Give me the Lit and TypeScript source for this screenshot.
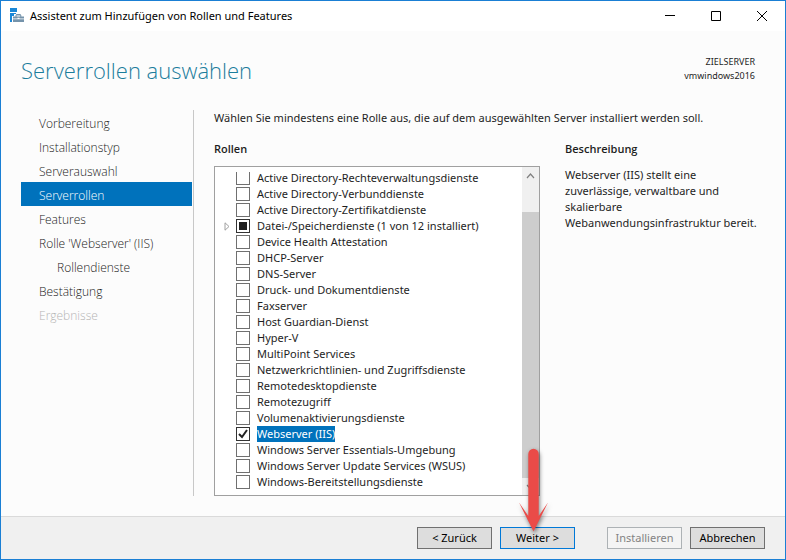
import { LitElement, html, css, svg } from "lit";
import { customElement, property } from "lit/decorators.js";
import { classMap } from "lit/directives/class-map.js";
import { live } from "lit/directives/live.js";

interface Step {
  label: string;
  state?: "current" | "disabled";
  sub?: boolean;
}

interface Role {
  label: string;
  checked?: boolean;
  partial?: boolean;
  selected?: boolean;
}

const STEPS: Step[] = [
  { label: "Vorbereitung" },
  { label: "Installationstyp" },
  { label: "Serverauswahl" },
  { label: "Serverrollen", state: "current" },
  { label: "Features" },
  { label: "Rolle 'Webserver' (IIS)" },
  { label: "Rollendienste", sub: true },
  { label: "Bestätigung" },
  { label: "Ergebnisse", state: "disabled" },
];

const ROLES: Role[] = [
  { label: "Active Directory-Rechteverwaltungsdienste" },
  { label: "Active Directory-Verbunddienste" },
  { label: "Active Directory-Zertifikatdienste" },
  { label: "Datei-/Speicherdienste (1 von 12 installiert)", partial: true },
  { label: "Device Health Attestation" },
  { label: "DHCP-Server" },
  { label: "DNS-Server" },
  { label: "Druck- und Dokumentdienste" },
  { label: "Faxserver" },
  { label: "Host Guardian-Dienst" },
  { label: "Hyper-V" },
  { label: "MultiPoint Services" },
  { label: "Netzwerkrichtlinien- und Zugriffsdienste" },
  { label: "Remotedesktopdienste" },
  { label: "Remotezugriff" },
  { label: "Volumenaktivierungsdienste" },
  { label: "Webserver (IIS)", checked: true, selected: true },
  { label: "Windows Server Essentials-Umgebung" },
  { label: "Windows Server Update Services (WSUS)" },
  { label: "Windows-Bereitstellungsdienste" },
];

@customElement("wizard-titlebar")
export class WizardTitlebar extends LitElement {
  static styles = css`
    :host {
      display: flex;
      align-items: center;
      height: 30px;
      padding-left: 8px;
      background: #fff;
      color: #000;
    }
    .logo {
      display: block;
      flex: none;
      margin-right: 5px;
    }
    .caption {
      flex: 1;
      font-size: 11px;
      line-height: 16px;
      white-space: nowrap;
    }
    .control {
      display: flex;
      align-items: center;
      justify-content: center;
      width: 46px;
      height: 30px;
      padding: 0;
      border: 0;
      background: none;
    }
  `;

  render() {
    return html`
      <svg class="logo" width="16" height="16" viewBox="0 0 16 16" aria-hidden="true">
        <path d="M1 0h7v4H1zM1 5h6v1H5v2H3v6H1z" fill="#1b87d6" />
        <path d="M4 8.500h2.500V7.300L7.500 6h3.800l1 1.300v1.200H15V14H4z" fill="#7593ab" />
        <path d="M7.500 8.500V7.500h3.800v1zM4 10.500h4.500v-.8h2v.8H15v.8H4z" fill="#fff" />
      </svg>
      <span class="caption">Assistent zum Hinzufügen von Rollen und Features</span>
      <button class="control" aria-label="Minimieren">
        <svg width="10" height="10"><path d="M0 4.500h10" stroke="#000" /></svg>
      </button>
      <button class="control" aria-label="Maximieren">
        <svg width="10" height="10"><path d="M.5.5h9v9h-9z" fill="none" stroke="#000" /></svg>
      </button>
      <button class="control" aria-label="Schließen">
        <svg width="10" height="10"><path d="M0 0l10 10M10 0L0 10" stroke="#000" /></svg>
      </button>
    `;
  }
}

@customElement("wizard-steps")
export class WizardSteps extends LitElement {
  @property({ attribute: false }) steps: Step[] = [];

  static styles = css`
    :host {
      display: block;
      padding-right: 1px;
      border-right: 1px solid #c8c8c8;
    }
    .steps {
      margin: 0;
      padding: 0;
      list-style: none;
    }
    .step {
      display: block;
      padding: 3px 0 0 18px;
      font-family: "Open Sans", sans-serif;
      font-size: 12px;
      font-weight: 300;
      line-height: 21px;
      color: #222;
      text-decoration: none;
      white-space: nowrap;
    }
    .sub {
      padding-left: 36px;
    }
    .current {
      background: #0072bc;
      color: #fff;
    }
    .disabled {
      color: #b4b4b4;
    }
  `;

  render() {
    return html`
      <nav aria-label="Schritte">
        <ul class="steps">
          ${this.steps.map(
            (s) => html`<li>
              <a
                href="#"
                class=${classMap({
                  step: true,
                  sub: !!s.sub,
                  current: s.state === "current",
                  disabled: s.state === "disabled",
                })}
                aria-disabled=${s.state === "disabled" ? "true" : "false"}
                >${s.label}</a
              >
            </li>`
          )}
        </ul>
      </nav>
    `;
  }
}

@customElement("role-list")
export class RoleList extends LitElement {
  @property({ attribute: false }) roles: Role[] = [];

  static styles = css`
    :host {
      display: flex;
      border: 1px solid #a0a0a0;
      background: #fff;
    }
    .roles {
      flex: 1;
      min-width: 0;
      margin: 0;
      padding: 3px 0 5px;
      list-style: none;
    }
    .role {
      display: flex;
      align-items: center;
      height: 16px;
      padding-left: 6px;
    }
    .toggle {
      flex: none;
      display: flex;
      align-items: center;
      justify-content: center;
      width: 12px;
      height: 16px;
      margin-right: 3px;
      padding: 0;
      border: 0;
      background: none;
    }
    .box {
      appearance: none;
      flex: none;
      width: 14px;
      height: 14px;
      margin: 0 7px 0 0;
      border: 1px solid #707070;
      background: #fff no-repeat center;
    }
    /* The list is scrolled a little past the top edge of its first row. */
    .role:first-child .box {
      clip-path: inset(1px 0 0);
    }
    .box:indeterminate {
      border-color: #333;
      background-image: linear-gradient(#212121, #212121);
      background-size: 8px 8px;
    }
    .box:checked {
      border-color: #333;
      background-image: url("data:image/svg+xml,%3Csvg xmlns='http://www.w3.org/2000/svg' width='12' height='12'%3E%3Cpath d='M2 6l3 3 5-7' fill='none' stroke='%23212121' stroke-width='2'/%3E%3C/svg%3E");
    }
    .name {
      font-size: 11px;
      line-height: 16px;
      color: #1e1e1e;
      white-space: nowrap;
    }
    .selected {
      background: #0072bc;
      color: #fff;
    }
    .scrollbar {
      flex: none;
      display: flex;
      flex-direction: column;
      width: 17px;
      background: #f0f0f0;
    }
    .arrow {
      display: flex;
      align-items: center;
      justify-content: center;
      height: 17px;
      padding: 0;
      border: 0;
      background: none;
    }
    .track {
      flex: 1;
      display: flex;
      padding-top: 28px;
    }
    .thumb {
      flex: 1;
      background: #cdcdcd;
    }
  `;

  private renderRole(role: Role, i: number) {
    return html`<li class="role">
      ${role.partial
        ? html`<button class="toggle" aria-label="Erweitern">
            <svg width="6" height="9"><path d="M1 .8v7.4l4-3.7z" fill="#fff" stroke="#a0a0a0" /></svg>
          </button>`
        : html`<span class="toggle"></span>`}
      <input
        class="box"
        type="checkbox"
        id="role-${i}"
        .checked=${live(!!role.checked)}
        .indeterminate=${!!role.partial}
      />
      <label for="role-${i}" class=${classMap({ name: true, selected: !!role.selected })}>${role.label}</label>
    </li>`;
  }

  render() {
    const chevron = (d: string) => svg`<path d=${d} fill="none" stroke="#808080" stroke-width="1.2" />`;
    return html`
      <ul class="roles">
        ${this.roles.map((r, i) => this.renderRole(r, i))}
      </ul>
      <div class="scrollbar">
        <button class="arrow" aria-label="Nach oben"><svg width="9" height="6">${chevron("M1 5l3.5-4L8 5")}</svg></button>
        <div class="track"><div class="thumb"></div></div>
        <button class="arrow" aria-label="Nach unten"><svg width="9" height="6">${chevron("M1 1l3.5 4L8 1")}</svg></button>
      </div>
    `;
  }
}

@customElement("wizard-footer")
export class WizardFooter extends LitElement {
  static styles = css`
    :host {
      display: flex;
      justify-content: flex-end;
      gap: 8px;
      padding: 10px 20px 10px 0;
      border-top: 1px solid #dadada;
      background: #f0f0f0;
    }
    .slot {
      position: relative;
      display: flex;
    }
    .next {
      margin-right: 24px;
    }
    .action {
      width: 75px;
      height: 22px;
      padding: 0;
      border: 1px solid #707070;
      background: #ddd;
      font: inherit;
      font-size: 11px;
      line-height: 16px;
      color: #000;
    }
    .default {
      border-color: #0078d7;
    }
    .action:disabled {
      border-color: #adb2b5;
      background: #f4f4f4;
      color: #838383;
    }
    .pointer {
      position: absolute;
      left: 14px;
      bottom: 15px;
      pointer-events: none;
      filter: drop-shadow(1px 2px 2px rgba(0, 0, 0, 0.5));
    }
  `;

  render() {
    return html`
      <button class="action">&lt; Zurück</button>
      <div class="slot next">
        <button class="action default">Weiter &gt;</button>
        <svg class="pointer" width="40" height="86" viewBox="0 0 40 86" aria-hidden="true">
          <path d="M14.300 6a5.200 5.200 0 0 1 10.400 0v62L34 54.500 19.500 83.500 5 54.500l9.300 13.500z" fill="#ea4b48" />
        </svg>
      </div>
      <button class="action" disabled>Installieren</button>
      <button class="action">Abbrechen</button>
    `;
  }
}

@customElement("app-root")
export class AppRoot extends LitElement {
  static styles = css`
    :host {
      display: flex;
      flex-direction: column;
      box-sizing: border-box;
      min-height: 100vh;
      border: 1px solid #1a7fd4;
      background: #fcfcfc;
      font-family: "Noto Sans", "Open Sans", sans-serif;
      color: #1e1e1e;
    }
    .header {
      display: flex;
      justify-content: space-between;
      align-items: flex-start;
      height: 55px;
      padding: 24px 30px 0 20px;
    }
    .heading {
      margin: 0;
      font-family: "Open Sans", sans-serif;
      font-size: 22px;
      font-weight: 300;
      line-height: 30px;
      color: #1c7d9c;
    }
    .target {
      margin: 0;
      font-size: 9px;
      line-height: 14px;
      text-align: right;
    }
    .body {
      flex: 1;
      display: grid;
      grid-template-columns: 173px minmax(0, 1fr);
      column-gap: 20px;
      padding: 0 20px 20px;
    }
    .intro {
      margin: 0 0 15px;
      font-size: 11px;
      line-height: 16px;
    }
    .columns {
      display: grid;
      grid-template-columns: minmax(0, 1fr) 200px;
      column-gap: 25px;
    }
    .label {
      margin: 0 0 9px;
      font-family: "Open Sans", sans-serif;
      font-size: 11px;
      font-weight: 600;
      line-height: 16px;
    }
    .description {
      margin: 10px 0 0;
      font-size: 11px;
      line-height: 16px;
    }
  `;

  render() {
    return html`
      <wizard-titlebar></wizard-titlebar>
      <header class="header">
        <h1 class="heading">Serverrollen auswählen</h1>
        <p class="target">ZIELSERVER<br />vmwindows2016</p>
      </header>
      <div class="body">
        <wizard-steps .steps=${STEPS}></wizard-steps>
        <main>
          <p class="intro">
            Wählen Sie mindestens eine Rolle aus, die auf dem ausgewählten Server installiert werden soll.
          </p>
          <div class="columns">
            <section>
              <h2 class="label">Rollen</h2>
              <role-list .roles=${ROLES}></role-list>
            </section>
            <section>
              <h2 class="label">Beschreibung</h2>
              <p class="description">
                Webserver (IIS) stellt eine zuverlässige, verwaltbare und skalierbare
                Webanwendungsinfrastruktur bereit.
              </p>
            </section>
          </div>
        </main>
      </div>
      <wizard-footer></wizard-footer>
    `;
  }
}
